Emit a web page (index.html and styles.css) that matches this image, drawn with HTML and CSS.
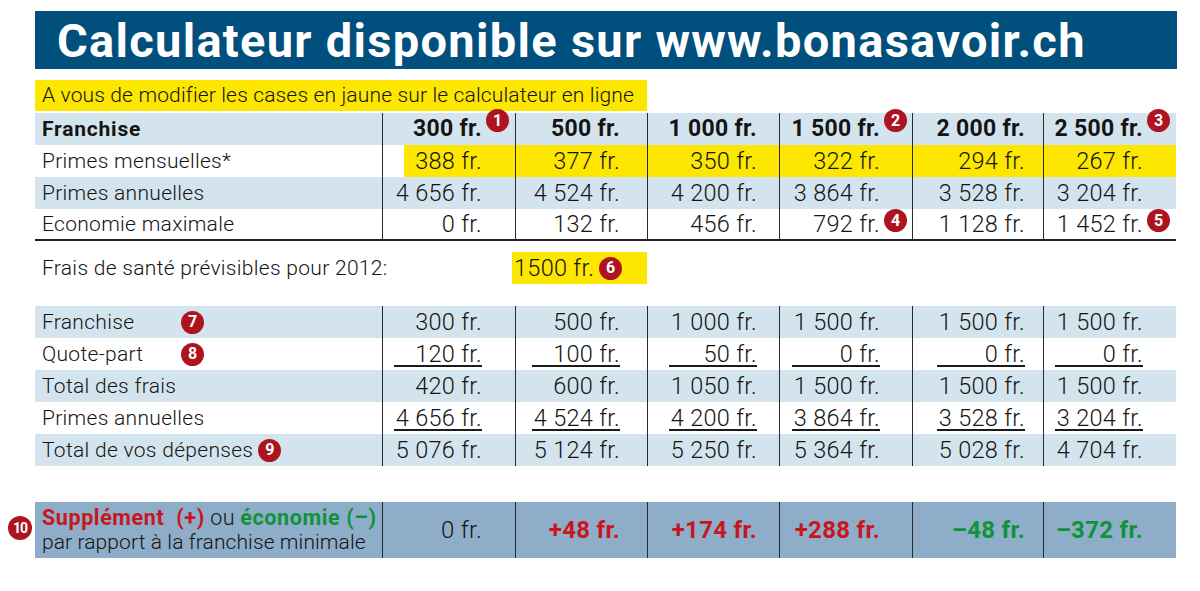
FILE: index.html
```html
<!DOCTYPE html>
<html lang="fr">
<head>
<meta charset="utf-8">
<title>Calculateur franchise</title>
<link rel="stylesheet" href="styles.css">
</head>
<body>
<div class="page">
  <div class="title">Calculateur disponible sur www.bonasavoir.ch</div>
  <div class="note">A vous de modifier les cases en jaune sur le calculateur en ligne</div>

  <div class="table t1">
    <div class="row blue head">
      <div class="lbl">Franchise</div>
      <div class="c"><span class="v">300 fr.<span class="badge up">1</span></span></div>
      <div class="c"><span class="v">500 fr.</span></div>
      <div class="c"><span class="v">1 000 fr.</span></div>
      <div class="c"><span class="v">1 500 fr.<span class="badge up">2</span></span></div>
      <div class="c"><span class="v">2 000 fr.</span></div>
      <div class="c"><span class="v">2 500 fr.<span class="badge up">3</span></span></div>
    </div>
    <div class="row">
      <div class="lbl">Primes mensuelles*</div>
      <div class="c yel-inset"><span class="v">388 fr.</span></div>
      <div class="c yel"><span class="v">377 fr.</span></div>
      <div class="c yel"><span class="v">350 fr.</span></div>
      <div class="c yel"><span class="v">322 fr.</span></div>
      <div class="c yel"><span class="v">294 fr.</span></div>
      <div class="c yel"><span class="v">267 fr.</span></div>
    </div>
    <div class="row blue">
      <div class="lbl">Primes annuelles</div>
      <div class="c"><span class="v">4 656 fr.</span></div>
      <div class="c"><span class="v">4 524 fr.</span></div>
      <div class="c"><span class="v">4 200 fr.</span></div>
      <div class="c"><span class="v">3 864 fr.</span></div>
      <div class="c"><span class="v">3 528 fr.</span></div>
      <div class="c"><span class="v">3 204 fr.</span></div>
    </div>
    <div class="row last">
      <div class="lbl">Economie maximale</div>
      <div class="c"><span class="v">0 fr.</span></div>
      <div class="c"><span class="v">132 fr.</span></div>
      <div class="c"><span class="v">456 fr.</span></div>
      <div class="c"><span class="v">792 fr.<span class="badge mid">4</span></span></div>
      <div class="c"><span class="v">1 128 fr.</span></div>
      <div class="c"><span class="v">1 452 fr.<span class="badge mid">5</span></span></div>
    </div>
  </div>

  <div class="frais">
    <div class="frais-lbl">Frais de santé prévisibles pour 2012:</div>
    <div class="frais-box">1500 fr.<span class="badge inl">6</span></div>
  </div>

  <div class="table t2">
    <div class="row blue">
      <div class="lbl"><span class="lbl-fix">Franchise</span><span class="badge">7</span></div>
      <div class="c"><span class="v">300 fr.</span></div>
      <div class="c"><span class="v">500 fr.</span></div>
      <div class="c"><span class="v">1 000 fr.</span></div>
      <div class="c"><span class="v">1 500 fr.</span></div>
      <div class="c"><span class="v">1 500 fr.</span></div>
      <div class="c"><span class="v">1 500 fr.</span></div>
    </div>
    <div class="row">
      <div class="lbl"><span class="lbl-fix">Quote-part</span><span class="badge">8</span></div>
      <div class="c"><span class="v ul">120 fr.</span></div>
      <div class="c"><span class="v ul">100 fr.</span></div>
      <div class="c"><span class="v ul">50 fr.</span></div>
      <div class="c"><span class="v ul">0 fr.</span></div>
      <div class="c"><span class="v ul">0 fr.</span></div>
      <div class="c"><span class="v ul">0 fr.</span></div>
    </div>
    <div class="row blue">
      <div class="lbl">Total des frais</div>
      <div class="c"><span class="v">420 fr.</span></div>
      <div class="c"><span class="v">600 fr.</span></div>
      <div class="c"><span class="v">1 050 fr.</span></div>
      <div class="c"><span class="v">1 500 fr.</span></div>
      <div class="c"><span class="v">1 500 fr.</span></div>
      <div class="c"><span class="v">1 500 fr.</span></div>
    </div>
    <div class="row">
      <div class="lbl">Primes annuelles</div>
      <div class="c"><span class="v ul">4 656 fr.</span></div>
      <div class="c"><span class="v ul">4 524 fr.</span></div>
      <div class="c"><span class="v ul">4 200 fr.</span></div>
      <div class="c"><span class="v ul">3 864 fr.</span></div>
      <div class="c"><span class="v ul">3 528 fr.</span></div>
      <div class="c"><span class="v ul">3 204 fr.</span></div>
    </div>
    <div class="row blue">
      <div class="lbl">Total de vos dépenses<span class="badge inl">9</span></div>
      <div class="c"><span class="v">5 076 fr.</span></div>
      <div class="c"><span class="v">5 124 fr.</span></div>
      <div class="c"><span class="v">5 250 fr.</span></div>
      <div class="c"><span class="v">5 364 fr.</span></div>
      <div class="c"><span class="v">5 028 fr.</span></div>
      <div class="c"><span class="v">4 704 fr.</span></div>
    </div>
  </div>

  <div class="table t3">
    <span class="badge ten">10</span>
    <div class="row steel">
      <div class="lbl two">
        <div class="line1"><span class="red b">Supplément&nbsp; (+)</span> ou <span class="green b">économie (–)</span></div>
        <div class="line2">par rapport à la franchise minimale</div>
      </div>
      <div class="c"><span class="v big">0 fr.</span></div>
      <div class="c"><span class="v big b red">+48 fr.</span></div>
      <div class="c"><span class="v big b red">+174 fr.</span></div>
      <div class="c"><span class="v big b red">+288 fr.</span></div>
      <div class="c"><span class="v big b green">–48 fr.</span></div>
      <div class="c"><span class="v big b green">–372 fr.</span></div>
    </div>
  </div>
</div>
</body>
</html>
```

FILE: styles.css
```css
* { box-sizing: border-box; }
body {
  margin: 0;
  background: #fff;
  color: #141414;
  font-family: Roboto, "Liberation Sans", sans-serif;
  font-weight: 300;
  letter-spacing: 0.3px;
}
.page {
  padding: 11px 0 0 35px;
  width: 1200px;
}
.title {
  width: 1142px;
  height: 58px;
  background: #004f7d;
  color: #fff;
  font-weight: 700;
  font-size: 47px;
  letter-spacing: 1.3px;
  line-height: 60px;
  padding-left: 22px;
  white-space: nowrap;
}
.note {
  margin-top: 11px;
  width: 612px;
  height: 31px;
  background: #fde600;
  font-size: 21px;
  letter-spacing: 0.15px;
  line-height: 31px;
  padding-left: 7px;
  white-space: nowrap;
}
.table { width: 1141px; position: relative; }
.t1 { margin-top: 2px; border-bottom: 2px solid #222; }
.t2 { margin-top: 22px; }
.t3 { margin-top: 36px; }
.row {
  display: grid;
  grid-template-columns: 347px 133px 132px 132px 133px 131px 133px;
  height: 32px;
  font-size: 21px;
}
.row.last { height: 30px; }
.row.blue { background: #d4e4ee; }
.row.steel { background: #8eadc8; height: 56px; }
.lbl {
  display: flex;
  align-items: center;
  padding-left: 7px;
  white-space: nowrap;
}
.row.head { font-weight: 700; }
.row.head .lbl { letter-spacing: 0.8px; }
.lbl.two {
  flex-direction: column;
  align-items: flex-start;
  justify-content: center;
  line-height: 24px;
}
.line1 { font-size: 21.5px; }
.line1 .b { letter-spacing: 0.6px; }
.line2 { letter-spacing: 0.1px; }
.lbl-fix { display: inline-block; width: 139px; }
.c {
  display: flex;
  align-items: center;
  justify-content: flex-end;
  border-left: 1.5px solid #2a2a2a;
  white-space: nowrap;
}
.c:nth-child(2) { padding-right: 33px; }
.c:nth-child(3) { padding-right: 27px; }
.c:nth-child(4) { padding-right: 22px; }
.c:nth-child(5) { padding-right: 32px; }
.c:nth-child(6) { padding-right: 18px; }
.c:nth-child(7) { padding-right: 33px; }
.c.yel { background: #fde600; }
.c.yel-inset { background: linear-gradient(to right, transparent 21px, #fde600 21px); }
.v { position: relative; line-height: 24px; font-size: 23.5px; }
.row.head .v { font-size: 23px; }
.v.ul {
  display: inline-block;
  width: 88px;
  text-align: right;
  line-height: 21px;
  border-bottom: 2.5px solid #1c1c1c;
  margin-top: 3px;
}
.v.big { font-size: 24px; }
.b { font-weight: 700; }
.red { color: #c8161e; }
.green { color: #10923a; }

.frais {
  margin-top: 11px;
  height: 32px;
  display: flex;
  align-items: center;
  font-size: 21px;
}
.frais-lbl { width: 477px; padding-left: 7px; }
.frais-box {
  width: 135px;
  height: 32px;
  background: #fde600;
  display: flex;
  align-items: center;
  padding-left: 2px;
  font-size: 23.5px;
}

.badge {
  display: inline-flex;
  align-items: center;
  justify-content: center;
  width: 23px;
  height: 23px;
  border-radius: 50%;
  background: #ae1420;
  color: #fff;
  font-family: Roboto, "Liberation Sans", sans-serif;
  font-weight: 700;
  font-size: 16px;
  letter-spacing: 0;
  line-height: 1;
}
.badge.up, .badge.mid { position: absolute; left: calc(100% + 4px); }
.badge.up { top: -8px; }
.badge.mid { top: -3px; }
.badge.inl { margin-left: 5px; }
.badge.ten {
  position: absolute;
  left: -27px;
  top: 14px;
  width: 24px;
  height: 24px;
  font-size: 14px;
  letter-spacing: -1px;
}
```
